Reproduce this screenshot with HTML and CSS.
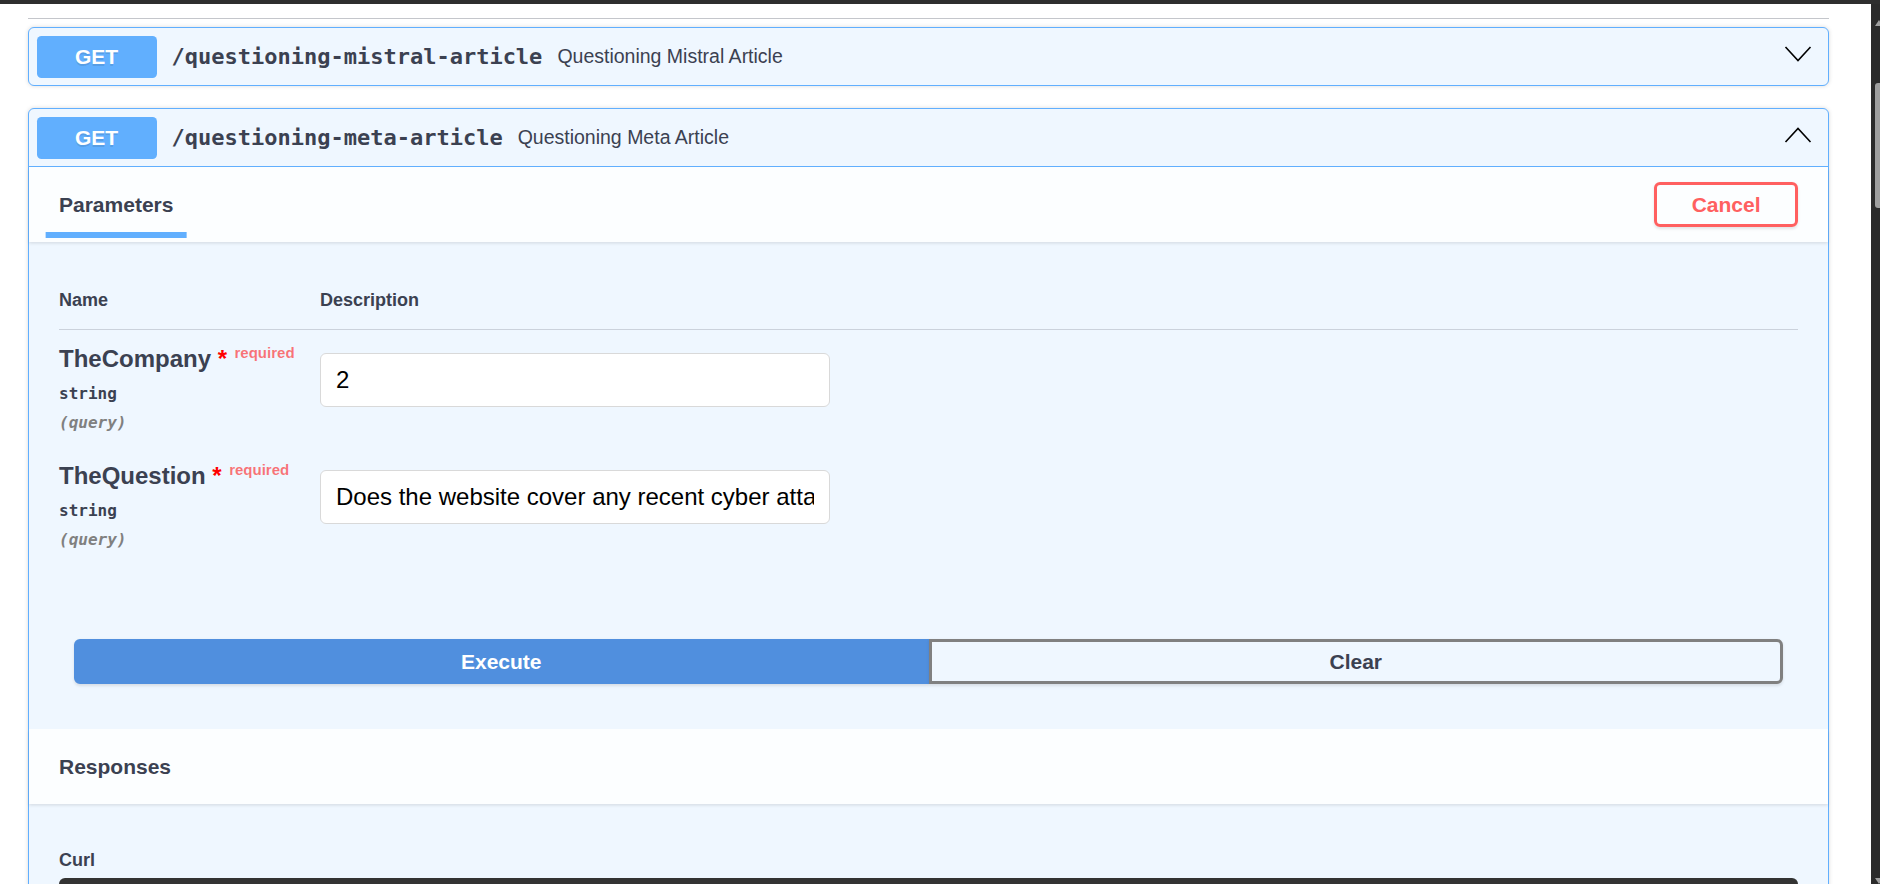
FILE: index.html
```html
<!DOCTYPE html>
<html>
<head>
<meta charset="utf-8">
<link rel="stylesheet" href="styles.css">
</head>
<body>
<div class="topbar"></div>
<div class="page">
  <div class="content">
    <div class="tagline"></div>

    <div class="opblock">
      <div class="summary">
        <span class="method">GET</span>
        <span class="path">/questioning-mistral-article</span>
        <span class="summary-desc">Questioning Mistral Article</span>
        <svg class="arrow" width="28" height="18" viewBox="0 0 28 18"><polyline points="1.5,2 14,15.5 26.5,2" fill="none" stroke="#000" stroke-width="1.6"/></svg>
      </div>
    </div>

    <div class="opblock">
      <div class="summary open">
        <span class="method">GET</span>
        <span class="path">/questioning-meta-article</span>
        <span class="summary-desc">Questioning Meta Article</span>
        <svg class="arrow" width="28" height="18" viewBox="0 0 28 18"><polyline points="1.5,16 14,2.5 26.5,16" fill="none" stroke="#000" stroke-width="1.6"/></svg>
      </div>

      <div class="section-header">
        <div class="tab"><span class="tab-label">Parameters</span></div>
        <button class="btn cancel">Cancel</button>
      </div>

      <div class="table-container">
        <div class="params-head">
          <div class="th">Name</div>
          <div class="th">Description</div>
        </div>
        <div class="param-row">
          <div class="col-name">
            <div class="param-name">TheCompany<span class="star">&nbsp;*</span><span class="req">required</span></div>
            <div class="param-type">string</div>
            <div class="param-in">(query)</div>
          </div>
          <div class="col-desc">
            <input class="param-input" type="text" value="2">
          </div>
        </div>
        <div class="param-row">
          <div class="col-name">
            <div class="param-name">TheQuestion<span class="star">&nbsp;*</span><span class="req">required</span></div>
            <div class="param-type">string</div>
            <div class="param-in">(query)</div>
          </div>
          <div class="col-desc">
            <input class="param-input" type="text" value="Does the website cover any recent cyber attacks?">
          </div>
        </div>
      </div>

      <div class="btn-group">
        <button class="btn execute">Execute</button>
        <button class="btn clear">Clear</button>
      </div>

      <div class="section-header">
        <h4 class="resp-title">Responses</h4>
      </div>

      <div class="responses-inner">
        <h4 class="curl-title">Curl</h4>
        <div class="curl-box"></div>
      </div>
    </div>
  </div>
  <div class="scrollbar">
    <div class="sb-up"></div>
    <div class="sb-thumb"></div>
    <div class="sb-down"></div>
  </div>
</div>
</body>
</html>
```

FILE: styles.css
```css
html, body {
  margin: 0;
  padding: 0;
}
body {
  width: 1880px;
  height: 884px;
  overflow: hidden;
  background: #fff;
  font-family: "Liberation Sans", Arial, sans-serif;
  color: #3b4151;
}
.topbar {
  height: 4px;
  background: #2e2e2e;
}
.page {
  display: flex;
  height: 880px;
  overflow: hidden;
}
.content {
  flex: 1;
  min-width: 0;
  padding: 14px 42px 0 28px;
}
.tagline {
  height: 1px;
  background: #c4c6cb;
  margin-bottom: 8px;
}
.opblock {
  border: 1px solid #61affe;
  background: #eff7ff;
  border-radius: 6px;
  margin-bottom: 22px;
  box-shadow: 0 0 4px rgba(0, 0, 0, 0.15);
}
.summary {
  display: flex;
  align-items: center;
  padding: 7.5px;
}
.summary.open {
  border-bottom: 1px solid #61affe;
}
.method {
  width: 120px;
  height: 42px;
  line-height: 42px;
  text-align: center;
  background: #61affe;
  border-radius: 4.5px;
  color: #fff;
  font-weight: 700;
  font-size: 21px;
  text-shadow: 0 1.5px 0 rgba(0, 0, 0, 0.1);
}
.path {
  margin-left: 15px;
  padding-right: 15px;
  font-family: "DejaVu Sans Mono", "Liberation Mono", monospace;
  font-weight: 700;
  font-size: 22px;
  color: #3b4151;
}
.summary-desc {
  font-size: 19.5px;
  color: #3b4151;
}
.arrow {
  margin-left: auto;
  margin-right: 9px;
  margin-top: -5px;
}
.section-header {
  display: flex;
  align-items: center;
  justify-content: space-between;
  height: 75px;
  padding: 0 30px;
  background: rgba(255, 255, 255, 0.8);
  box-shadow: 0 1.5px 3px rgba(0, 0, 0, 0.1);
}
.tab {
  font-size: 21px;
  font-weight: 700;
  line-height: 24px;
}
.tab-label {
  position: relative;
  display: inline-block;
}
.tab-label::after {
  content: "";
  position: absolute;
  left: 50%;
  bottom: -21.5px;
  width: 123%;
  height: 6px;
  transform: translateX(-50%);
  background: #61affe;
}
.btn {
  font-family: "Liberation Sans", Arial, sans-serif;
  font-size: 21px;
  font-weight: 700;
  line-height: 24px;
  padding: 7.5px 34.5px;
  border: 3px solid #888;
  border-radius: 6px;
  background: transparent;
  box-shadow: 0 1.5px 3px rgba(0, 0, 0, 0.1);
  color: #3b4151;
}
.cancel {
  border-color: #ff6060;
  color: #ff6060;
}
.table-container {
  padding: 30px;
}
.params-head {
  display: grid;
  grid-template-columns: 261px 1fr;
  border-bottom: 1px solid rgba(59, 65, 81, 0.2);
}
.th {
  padding: 18px 0;
  font-size: 18px;
  font-weight: 700;
  line-height: 21px;
}
.param-row {
  display: grid;
  grid-template-columns: 261px 1fr;
  height: 117px;
  box-sizing: border-box;
  padding-top: 15px;
}
.param-name {
  font-size: 24px;
  font-weight: 700;
  line-height: 27px;
  white-space: nowrap;
}
.star {
  color: #ff0000;
}
.req {
  position: relative;
  top: -9px;
  padding-left: 7.5px;
  font-size: 15px;
  font-weight: 700;
  color: rgba(255, 0, 0, 0.55);
}
.param-type {
  padding: 7.5px 0;
  font-family: "DejaVu Sans Mono", "Liberation Mono", monospace;
  font-size: 16px;
  font-weight: 700;
  line-height: 21px;
}
.param-in {
  margin-top: 1px;
  font-family: "DejaVu Sans Mono", "Liberation Mono", monospace;
  font-size: 16px;
  font-weight: 700;
  font-style: italic;
  line-height: 21px;
  color: #808080;
}
.param-input {
  display: block;
  box-sizing: border-box;
  width: 510px;
  height: 54px;
  margin: 7.5px 0 0;
  padding: 0 15px;
  border: 1px solid #d9d9d9;
  border-radius: 6px;
  background: #fff;
  font-family: "Liberation Sans", Arial, sans-serif;
  font-size: 24px;
  color: #000;
  outline: none;
}
.btn-group {
  display: flex;
  padding: 45px;
}
.btn-group .btn {
  flex: 1;
}
.execute {
  background: #508fde;
  border-color: #508fde;
  color: #fff;
  border-radius: 6px 0 0 6px;
}
.clear {
  border-color: #808080;
  border-radius: 0 6px 6px 0;
}
.resp-title {
  margin: 0;
  font-size: 21px;
  font-weight: 700;
}
.responses-inner {
  padding: 30px;
}
.curl-title {
  margin: 16px 0 7px;
  font-size: 18px;
  font-weight: 700;
  line-height: 21px;
}
.curl-box {
  height: 120px;
  background: #333;
  border-radius: 6px;
}
.scrollbar {
  width: 9px;
  background: #2b2b2b;
  position: relative;
}
.sb-thumb {
  position: absolute;
  left: 4px;
  right: 0;
  top: 79px;
  height: 125px;
  background: #9f9f9f;
  border-radius: 3px 0 0 3px;
}
.sb-up {
  position: absolute;
  left: 4px;
  top: 16px;
  width: 0;
  height: 0;
  border-left: 4px solid transparent;
  border-right: 4px solid transparent;
  border-bottom: 6px solid #9f9f9f;
}
.sb-down {
  position: absolute;
  left: 4px;
  bottom: 0;
  width: 0;
  height: 0;
  border-left: 4px solid transparent;
  border-right: 4px solid transparent;
  border-top: 6px solid #9f9f9f;
}
```
